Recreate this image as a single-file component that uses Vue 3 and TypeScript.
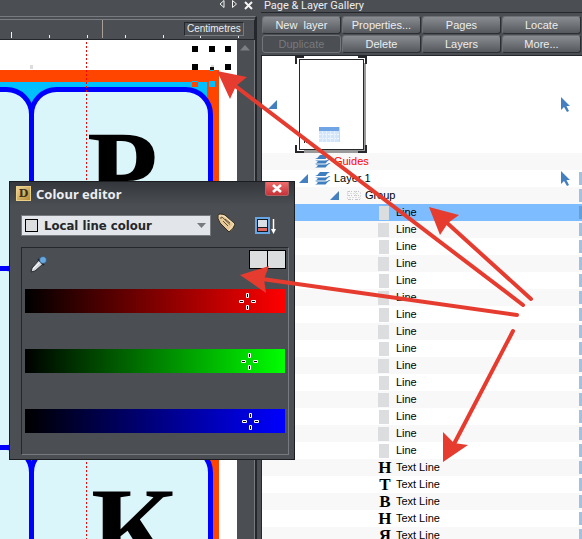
<script setup lang="ts">
import { ref } from 'vue'

interface TreeNode {
  id: number
  label: string
  depth: number
  kind: 'guides' | 'layer' | 'group' | 'line' | 'text'
  glyph?: string
  wide?: boolean
}

interface Channel {
  name: string
  value: number
}

const actions: { label: string; disabled?: boolean }[] = [
  { label: 'New \u00a0layer' },
  { label: 'Properties...' },
  { label: 'Pages' },
  { label: 'Locate' },
  { label: 'Duplicate', disabled: true },
  { label: 'Delete' },
  { label: 'Layers' },
  { label: 'More...' },
]

const lines = Array.from({ length: 15 }, (_, i) => ({
  label: 'Line',
  depth: 3,
  kind: 'line' as const,
  wide: i % 2 === 1,
}))
const texts = ['Н', 'Т', 'В', 'Н', 'Я'].map((glyph) => ({
  label: 'Text Line',
  depth: 3,
  kind: 'text' as const,
  glyph,
}))

const nodes: TreeNode[] = [
  { label: 'Guides', depth: 1, kind: 'guides' as const },
  { label: 'Layer 1', depth: 1, kind: 'layer' as const },
  { label: 'Group', depth: 2, kind: 'group' as const },
  ...lines,
  ...texts,
].map((node, id) => ({ ...node, id }))

const selected = ref(3)
const channels = ref<Channel[]>([
  { name: 'red', value: 225 },
  { name: 'green', value: 227 },
  { name: 'blue', value: 228 },
])

const cards = [89.5, 268.5, 447.5].flatMap((y) => [-147.5, 31.5].map((x) => ({ x, y })))
const ticks = [11, 49, 87, 125, 163, 200, 238]
const handles = [
  [192, 46], [209, 46], [225, 46], [192, 64], [225, 64],
]
</script>

<template>
  <main class="app">
    <section class="document" aria-label="Document">
      <header class="doc-bar">
        <button class="bar-btn" aria-label="Previous">
          <svg width="8" height="10"><path d="M6 .5V7.500L2 4Z" /></svg>
        </button>
        <button class="bar-btn" aria-label="Next">
          <svg width="8" height="10"><path d="M1.500 .5V7.500L5.500 4Z" /></svg>
        </button>
        <button class="bar-btn" aria-label="Close document">
          <svg width="9" height="9"><path class="cross" d="M1 1L8 8M8 1L1 8" /></svg>
        </button>
      </header>
      <div class="view">
        <div class="ruler">
          <svg class="ruler-ticks" width="100%" height="19" aria-hidden="true">
            <rect v-for="(t, i) in ticks" :key="t" :x="t" :y="i ? 15 : 12" width="1" :height="i ? 3 : 6" fill="#f0f0f0" />
            <rect x="102" y="0" width="1" height="18" fill="#a8a096" />
          </svg>
          <span class="unit">Centimetres</span>
        </div>
        <div class="canvas-row">
          <svg class="canvas" aria-label="Artwork">
            <g transform="translate(0 -40)">
              <rect x="30" y="65" width="3" height="4" fill="#dcdcdc" />
              <rect x="-10" y="70" width="229" height="600" fill="#ff4500" />
              <rect x="-10" y="82" width="217" height="600" fill="#00bfff" />
              <rect
                v-for="c in cards" :key="`${c.x}:${c.y}`" :x="c.x" :y="c.y" width="179" height="179" rx="25"
                fill="#dbf6fa" stroke="#0000ff" stroke-width="5"
              />
              <text class="letter" x="87" y="211">&#1056;</text>
              <text class="letter" x="91" y="568">&#1050;</text>
              <path d="M86.500 42V600" stroke="#ff0000" stroke-dasharray="2 2" />
              <rect v-for="h in handles" :key="h.join()" :x="h[0]" :y="h[1]" width="6" height="6" fill="#000" />
              <rect x="211" y="65" width="3" height="3" fill="#dcdcdc" />
              <rect x="210" y="67" width="4" height="3" fill="#111" />
              <rect x="210" y="70" width="4" height="1" fill="#00bfff" />
              <rect x="192" y="81" width="6" height="6" fill="#ff4500" />
              <rect x="192" y="81" width="6" height="1" fill="#00bfff" />
              <rect x="209" y="81" width="6" height="6" fill="#00bfff" />
            </g>
          </svg>
          <div class="scroll">
            <svg width="10" height="6"><path d="M0 5.500L5 0L10 5.500Z" fill="#7c7f83" /></svg>
          </div>
        </div>
      </div>
    </section>

    <section class="gallery" aria-label="Page and layer gallery">
      <h1 class="gallery-title">Page &amp; Layer Gallery</h1>
      <div class="actions">
        <button v-for="a in actions" :key="a.label" class="action" :disabled="a.disabled">{{ a.label }}</button>
      </div>
      <div class="tree">
        <div class="page-row">
          <svg class="toggle page-toggle" width="10" height="10"><path d="M9 0V9H0Z" /></svg>
          <svg class="thumb" width="72" height="97" aria-label="Page 1">
            <path d="M5 7H71V97H9V93Z" fill="#9a9a9a" />
            <rect x="4.500" y="3.500" width="64" height="90" fill="#fff" stroke="#26282b" />
            <path d="M1 8V1H9M63 1H71V8M1 89V96H9M63 96H71V89" fill="none" stroke="#26282b" stroke-width="2" />
            <rect x="24" y="71" width="21" height="15" fill="#d3e5fa" />
            <rect x="24" y="71" width="21" height="4" fill="#6fa5e4" />
            <path d="M24 78.500H44M24 82.500H44" stroke="#f2f7fe" stroke-dasharray="2 1" />
            <path d="M27.500 75V86M31.500 75V86M35.500 75V86M39.500 75V86" stroke="#e5f0fd" />
            <path d="M44.500 71V86" stroke="#eccbe0" />
            <path d="M9.500 83V87M11.500 85V87" stroke="#222" />
          </svg>
          <svg class="pointer" width="9" height="15"><path d="M0 0V13L3 10L6 15L8 14L5.500 9H9Z" /></svg>
        </div>
        <ul class="nodes">
          <li v-for="n in nodes" :key="n.id">
            <button
              class="node" :class="[`depth-${n.depth}`, n.kind, { selected: n.id === selected }]"
              @click="selected = n.id"
            >
              <span class="toggle-cell">
                <svg v-if="n.kind === 'layer' || n.kind === 'group'" class="toggle" width="10" height="10"><path d="M9 0V9H0Z" /></svg>
              </span>
              <span class="icon">
                <svg v-if="n.kind === 'guides' || n.kind === 'layer'" width="16" height="13" fill="#3f7fc0">
                  <path d="M5 0H15Q12 1 10.500 4H0Q3 3 5 0Z" />
                  <path d="M0 5.500H9.500Q12 5.500 14 4H15.500Q12 6 10.500 8.500H0Q2 8 3 6.500Z" />
                  <path d="M0 9.500H9.500Q12 9.500 14 8H15.500Q12 10 10.500 12.500H0Q2 12 3 10.500Z" />
                </svg>
                <svg v-else-if="n.kind === 'group'" width="14" height="11">
                  <path d="M0 1.500H14M0 5.500H12M1 9.500H13" stroke="#c6c6c6" stroke-dasharray="3 1 1 2" />
                  <path d="M0 3.500H11M2 7.500H14M.5 1V10M8.500 1V8M13.500 2V9" fill="none" stroke="#dedede" stroke-dasharray="2 1" />
                </svg>
                <span v-else-if="n.kind === 'line'" class="line-chip" :class="{ wide: n.wide }"></span>
                <span v-else class="glyph">{{ n.glyph }}</span>
              </span>
              <span class="label">{{ n.label }}</span>
              <svg v-if="n.kind === 'layer'" class="pointer" width="9" height="15"><path d="M0 0V13L3 10L6 15L8 14L5.500 9H9Z" /></svg>
              <span v-if="n.kind !== 'guides'" class="tag"></span>
            </button>
          </li>
        </ul>
      </div>
    </section>

    <section class="dialog" role="dialog" aria-labelledby="dialog-title">
      <header class="dialog-head">
        <span class="badge" aria-hidden="true">D</span>
        <h2 id="dialog-title">Colour editor</h2>
        <button class="close" aria-label="Close">
          <svg width="10" height="9"><path d="M1 1L9 8M9 1L1 8" stroke="#fff" stroke-width="2.600" /></svg>
        </button>
      </header>
      <div class="tools">
        <div class="picker">
          <span class="picker-swatch"></span>
          <select aria-label="Colour to edit">
            <option>Local line colour</option>
          </select>
          <svg class="caret" width="9" height="5"><path d="M0 0H9L4.500 5Z" /></svg>
        </div>
        <button class="tool name-tool" aria-label="Name colour">
          <svg width="20" height="20">
            <path d="M1 2Q2 0 8 2L18 11Q17 16 12 19L3 10Q0 5 1 2Z" fill="#e5c896" stroke="#302a22" />
            <path d="M2 3L7 3L17 11L12 17" fill="none" stroke="#f8e6c2" />
            <path d="M4 6Q3 4 5 4L13 11.500M6 8L11 13M8 6L13 10" fill="none" stroke="#65523b" />
          </svg>
        </button>
        <button class="tool" aria-label="Show colour line">
          <svg width="21" height="18">
            <rect x="1" y="1" width="13" height="15" fill="#17191c" stroke="#67a6e4" stroke-width="2" />
            <rect x="3" y="3" width="9" height="7" fill="#d9dee4" />
            <rect x="3" y="11" width="9" height="3" fill="#dc6862" />
            <path d="M18.500 2V14" stroke="#fff" stroke-width="1.500" />
            <path d="M16 12H21L18.500 17Z" fill="#fff" />
          </svg>
        </button>
      </div>
      <div class="panel">
        <div class="panel-top">
          <button class="tool" aria-label="Colour picker">
            <svg width="17" height="17">
              <path d="M1 16L2 12L9 4L13 8L5 15Z" fill="#d5d8dc" stroke="#292c31" />
              <path d="M3 13L10 6" stroke="#fff" />
              <path d="M8 3L14 9" stroke="#22272d" stroke-width="2" />
              <circle cx="13" cy="4" r="3.500" fill="#67a8df" stroke="#284763" stroke-width=".6" />
            </svg>
          </button>
          <div class="swatches"><span></span><span></span></div>
        </div>
        <input
          v-for="c in channels" :key="c.name" v-model.number="c.value" class="channel" :class="c.name"
          type="range" min="0" max="255" :aria-label="c.name"
        >
      </div>
    </section>

    <svg class="arrows" aria-hidden="true">
      <g stroke="#e63c2f" stroke-width="4" stroke-linecap="round">
        <path d="M234 85L523 305M446 222L531 299M262 279L517 315M454 444L513 331" />
      </g>
      <g fill="#e63c2f">
        <path d="M217 71L247 77L236 86L230 99Z" />
        <path d="M429 207L459 215L448 223L440 235Z" />
        <path d="M240 275L269 266L264 279L266 293Z" />
        <path d="M443 462L443 432L454 443L468 445Z" />
      </g>
    </svg>
  </main>
</template>

<style>
body {
  margin: 0;
  background: #4b4e53;
}
</style>

<style scoped>
* {
  box-sizing: border-box;
}
button {
  padding: 0;
  border: 0;
  background: none;
  color: inherit;
  font: inherit;
}
svg {
  display: block;
  flex: none;
}
h1,
h2,
ul {
  margin: 0;
  padding: 0;
}
.app {
  position: relative;
  display: grid;
  grid-template-columns: 13fr 16fr;
  height: 100vh;
  overflow: hidden;
  background: #4b4e53;
  color: #eceef0;
  font: 11px/13px "Liberation Sans", Arial, sans-serif;
}
.document {
  display: flex;
  flex-direction: column;
  min-width: 0;
  min-height: 0;
}
.doc-bar {
  display: flex;
  flex: none;
  justify-content: flex-end;
  gap: 5px;
  height: 16px;
  padding-right: 8px;
}
.bar-btn {
  height: 10px;
  fill: none;
  stroke: #f4f4f4;
}
.bar-btn .cross {
  stroke-width: 2;
}
.view {
  display: flex;
  flex: 1;
  flex-direction: column;
  min-height: 0;
  margin-right: 4px;
  padding-top: 2px;
  border-top: 1px solid #777a7e;
  border-right: 2px solid #24272b;
}
.ruler {
  position: relative;
  flex: none;
  height: 21px;
  border: 1px solid #24272b;
  border-left: 0;
  border-top-color: #7b7e82;
}
.unit {
  position: absolute;
  top: 2px;
  right: 10px;
  width: 60px;
  height: 14px;
  border: 1px solid #24272b;
  border-right-color: #777a7e;
  border-bottom-color: #777a7e;
  background: #4b4e53;
  font-size: 10px;
  line-height: 12px;
  text-align: center;
}
.canvas-row {
  display: flex;
  flex: 1;
  min-height: 0;
}
.canvas {
  flex: 1;
  min-width: 0;
  height: 100%;
  background: #fff;
}
.letter {
  font: bold 116px "Liberation Serif", serif;
}
.scroll {
  flex: none;
  width: 18px;
  padding: 5px 0 0 3px;
  border-right: 1px solid #777a7e;
}
.gallery {
  display: flex;
  flex-direction: column;
  min-width: 0;
  min-height: 0;
}
.gallery-title {
  flex: none;
  height: 13px;
  padding-left: 3px;
  border-bottom: 1px solid #24272b;
  font: 11px/11px Roboto, sans-serif;
}
.actions {
  display: grid;
  flex: none;
  grid-template-columns: repeat(4, 1fr);
  gap: 1px;
  padding: 3px 1px 2px;
}
.action {
  height: 18px;
  border: 1px solid #6d7074;
  border-right-color: #2b2e32;
  border-bottom-color: #2b2e32;
  border-radius: 3px;
  background: linear-gradient(#898c90, #55585c);
  line-height: 14px;
}
.action:disabled {
  border-color: #727579;
  background: #4b4e53;
  color: #777a7e;
}
.tree {
  flex: 1;
  min-height: 0;
  overflow: hidden;
  border-top: 1px solid #24272b;
  border-left: 1px solid #24272b;
  background: #fff;
  color: #000;
}
.page-row {
  display: flex;
  align-items: center;
  height: 97px;
  padding-left: 6px;
}
.toggle,
.pointer {
  fill: #4480bf;
}
.thumb {
  margin-left: 17px;
}
.pointer {
  margin-right: 12px;
  margin-left: auto;
}
.nodes {
  list-style: none;
}
.node {
  display: flex;
  align-items: center;
  width: 100%;
  height: 17px;
  text-align: left;
}
li:nth-child(odd) .node {
  background: #f8f8f8;
}
li .node.selected {
  background: #7dbcff;
}
.depth-1 {
  padding-left: 37px;
}
.depth-2 {
  padding-left: 68px;
}
.depth-3 {
  padding-left: 99px;
}
.guides {
  color: #f00;
}
.toggle-cell {
  flex: none;
  width: 16px;
}
.icon {
  display: flex;
  flex: none;
  justify-content: center;
  width: 16px;
  margin-right: 3px;
}
.line-chip {
  width: 10px;
  height: 14px;
  margin-right: 2px;
  background: #dcdddf;
}
.line-chip.wide {
  width: 11px;
}
.glyph {
  font: bold 17px/17px "Liberation Serif", serif;
}
.label {
  white-space: nowrap;
}
.tag {
  width: 3px;
  height: 13px;
  margin-left: auto;
  background: #a3c0df;
}
.pointer + .tag {
  margin-left: 0;
}
.node .pointer {
  margin-right: 9px;
}
.selected .tag {
  background: #659fda;
}
.dialog {
  position: absolute;
  top: 181px;
  left: 9px;
  width: 286px;
  padding: 0 5px 4px 11px;
  border: 1px solid #1b1d20;
  background: linear-gradient(#34373b, #4b4e53 24px);
}
.dialog-head {
  display: flex;
  align-items: center;
  height: 23px;
  margin-left: -5px;
}
.badge {
  width: 15px;
  height: 15px;
  margin-right: 5px;
  border: 1px solid #e9cf87;
  background: linear-gradient(135deg, #ecd596, #b68c35);
  color: #3c3017;
  font: bold 11px/13px "DejaVu Serif", serif;
  text-align: center;
}
.dialog-head h2 {
  font: bold 13px/16px "Noto Sans", "Open Sans", sans-serif;
}
.close {
  display: grid;
  place-items: center;
  align-self: flex-start;
  width: 24px;
  height: 14px;
  margin-left: auto;
  border: 1px solid #b06363;
  border-top: 0;
  border-radius: 0 0 3px 3px;
  background: linear-gradient(#ef6d6d, #c63238);
}
.tools {
  display: flex;
  align-items: center;
  gap: 6px;
  margin: 10px 0 11px;
}
.picker {
  display: flex;
  position: relative;
  align-items: center;
  width: 190px;
  height: 21px;
}
.picker-swatch {
  position: absolute;
  left: 4px;
  width: 13px;
  height: 13px;
  border: 1px solid #000;
  background: #dcdddf;
  pointer-events: none;
}
.picker select {
  width: 100%;
  height: 100%;
  padding: 0 18px 0 22px;
  border: 1px solid #777a7e;
  border-radius: 0;
  appearance: none;
  background: #e2e5ea;
  color: #24272b;
  font: bold 13px/18px "DejaVu Sans Condensed", "DejaVu Sans", sans-serif;
}
.caret {
  position: absolute;
  right: 5px;
  fill: #777a7e;
  pointer-events: none;
}
.name-tool {
  align-self: flex-start;
  height: 18px;
}
.name-tool svg {
  margin-top: -2px;
}
.tool + .tool {
  margin-left: 12px;
}
.panel {
  padding: 2px 2px 21px 3px;
  border: 1px solid #24272b;
  border-right-color: #777a7e;
  border-bottom-color: #777a7e;
}
.panel-top {
  display: flex;
  justify-content: space-between;
  height: 39px;
  padding-left: 5px;
}
.panel-top .tool {
  margin-top: 6px;
  align-self: flex-start;
}
.swatches {
  display: flex;
  height: 19px;
}
.swatches span {
  width: 19px;
  border: 1px solid #000;
  background: #dcdddf;
}
.swatches span + span {
  margin-left: -1px;
}
.channel {
  display: block;
  width: 260px;
  height: 24px;
  margin: 0;
  appearance: none;
}
.channel + .channel {
  margin-top: 36px;
}
.channel::-webkit-slider-thumb {
  width: 17px;
  height: 17px;
  appearance: none;
  background: url("data:image/svg+xml,%3Csvg xmlns='http://www.w3.org/2000/svg' width='17' height='17'%3E%3Cg fill='%23000' stroke='%23fff'%3E%3Cpath d='M7.500.5h2v4h-2zM7.500 12.500h2v4h-2zM.5 7.500h4v2h-4zM12.500 7.500h4v2h-4z'/%3E%3C/g%3E%3C/svg%3E");
}
.red {
  background: linear-gradient(90deg, #000, #f00);
}
.green {
  background: linear-gradient(90deg, #000, #0f0);
}
.blue {
  background: linear-gradient(90deg, #000, #00f);
}
.arrows {
  position: absolute;
  inset: 0;
  width: 100%;
  height: 100%;
  pointer-events: none;
}
</style>
